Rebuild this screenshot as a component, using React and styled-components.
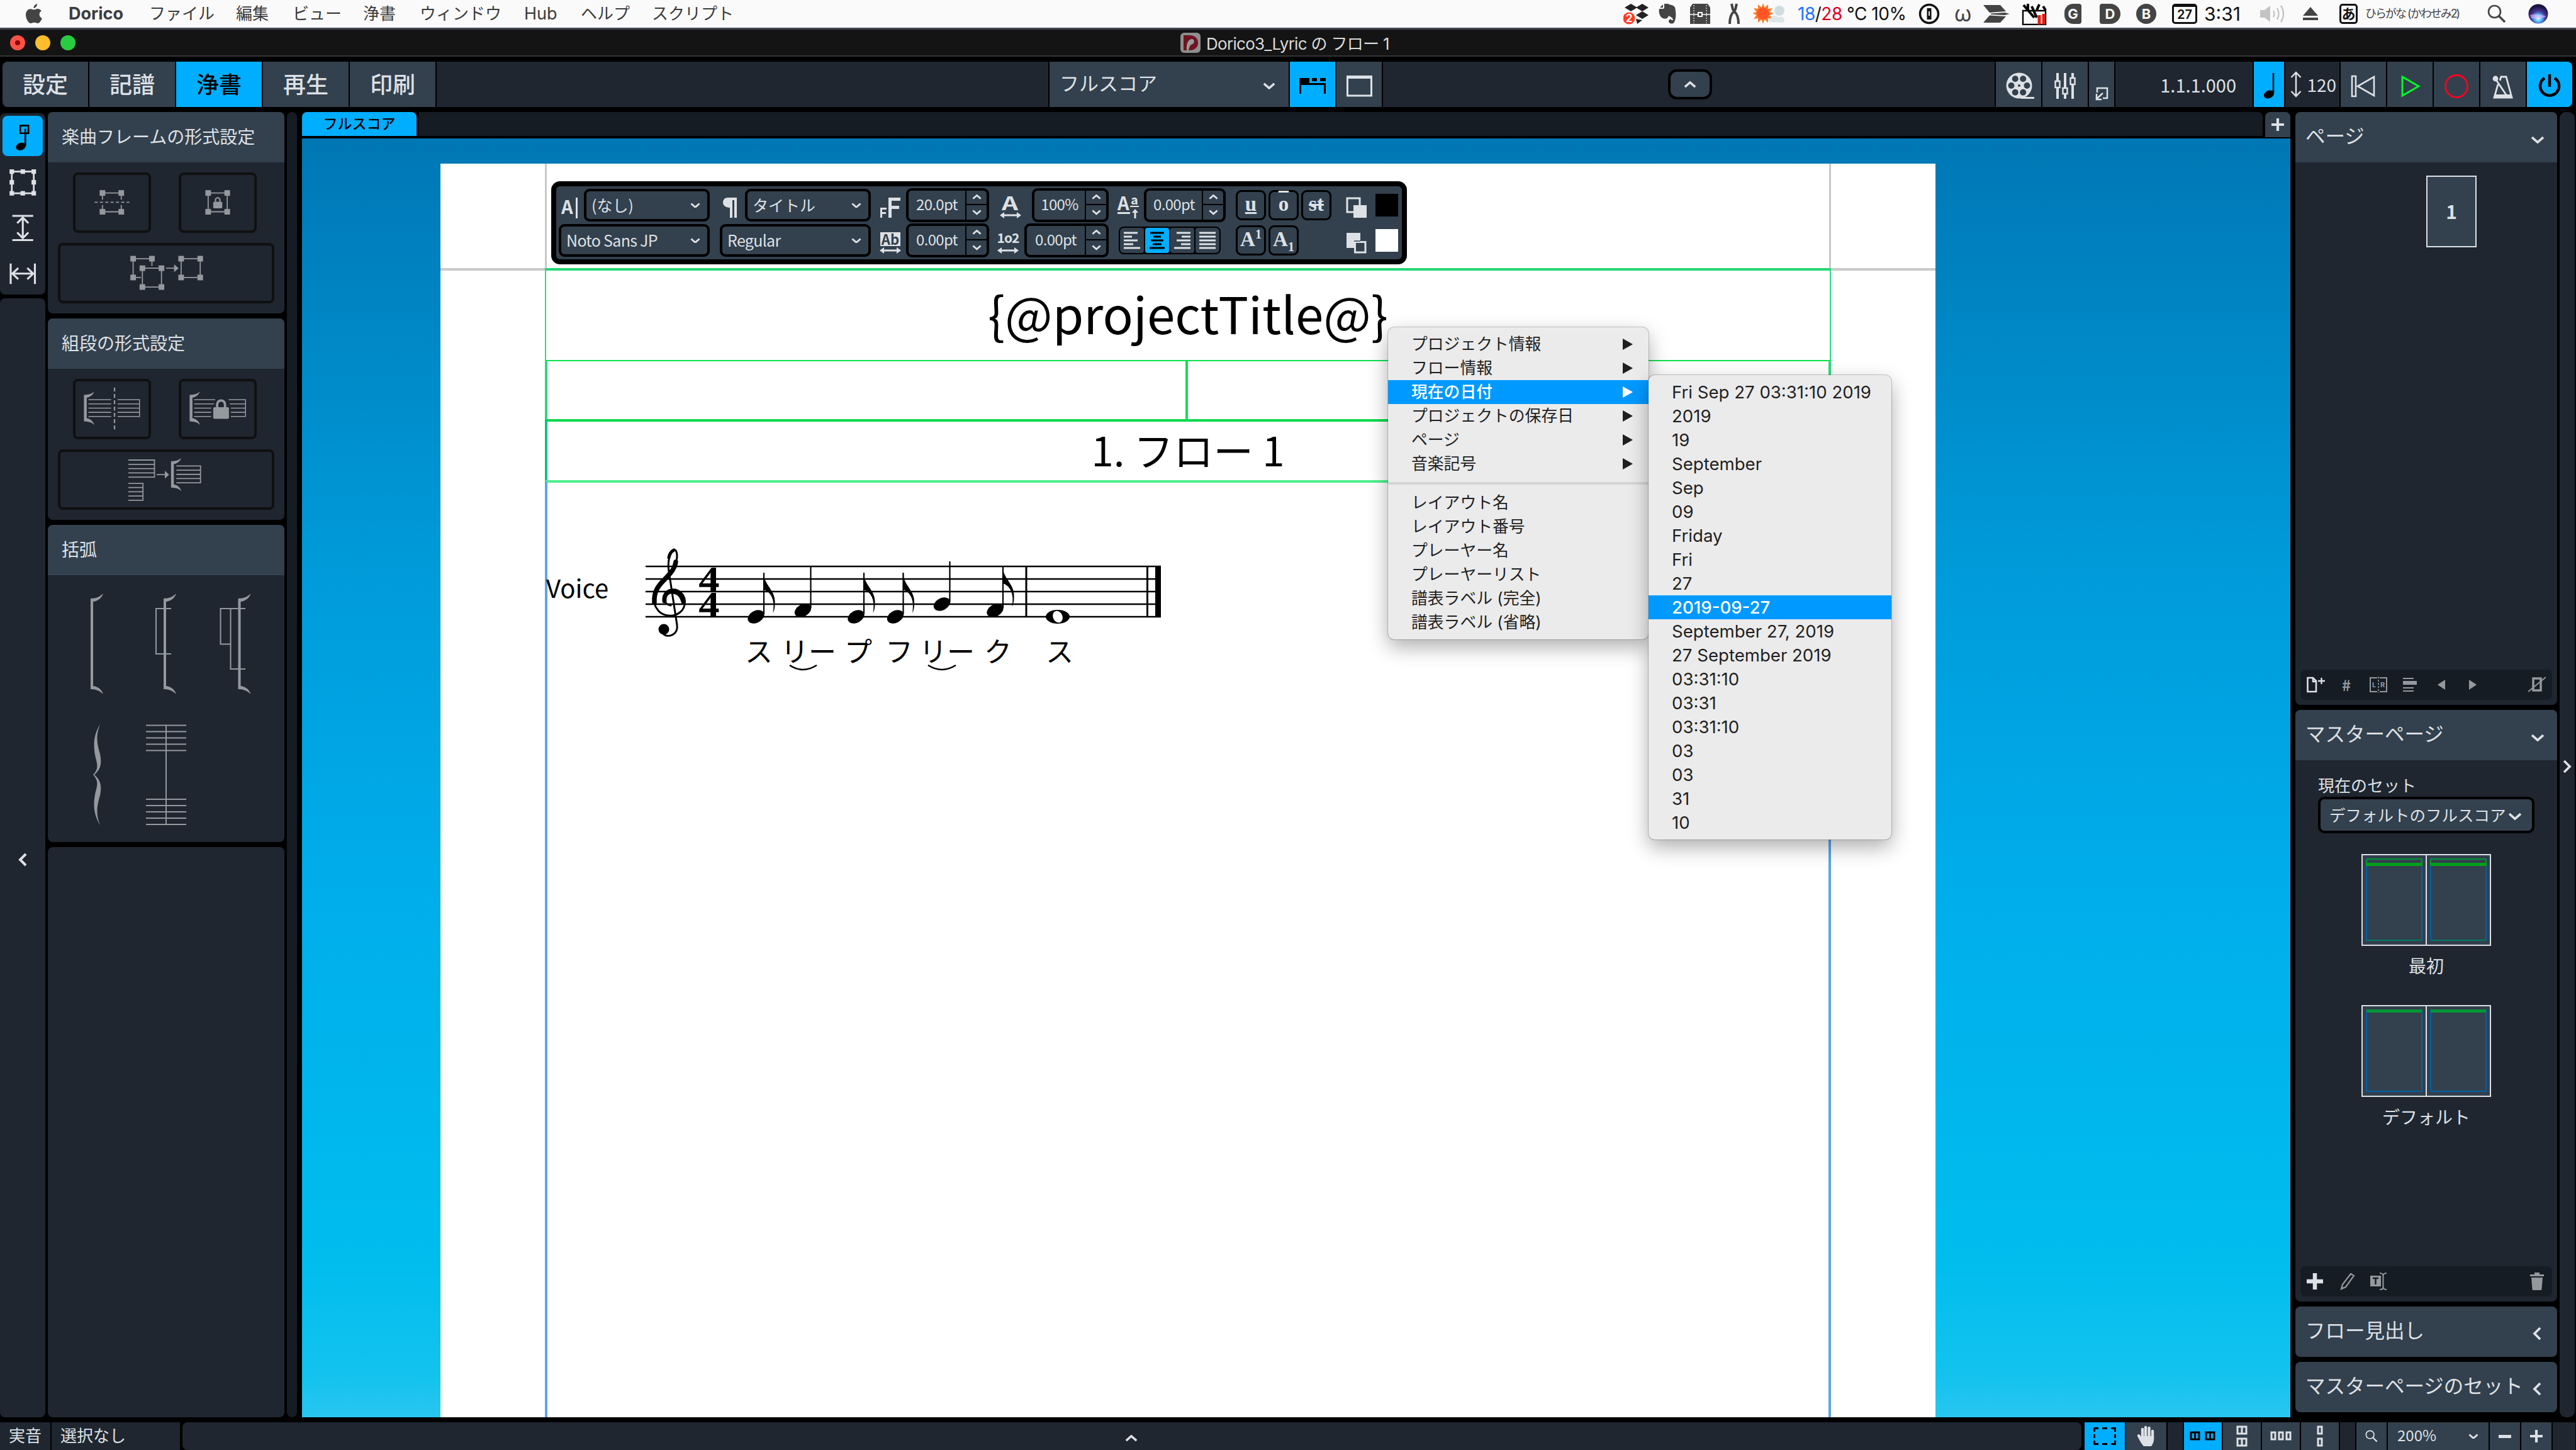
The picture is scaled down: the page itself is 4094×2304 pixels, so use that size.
import React from "react";
import styled, { createGlobalStyle, css } from "styled-components";

const Global = createGlobalStyle`
  * { box-sizing: border-box; }
  html, body { margin: 0; padding: 0; background: #000; }
  svg { display: block; flex: none; }
`;

const noto = '"Noto Sans CJK JP", "Noto Sans", sans-serif';
const mac = 'Inter, "Noto Sans CJK JP", sans-serif';

const light = "#dde1e6";
const dim = "#94999e";
const slate = "#33404d";
const panel = "#1f2630";
const deep = "#151c23";
const azure = "#00aeff";

const Desktop = styled.div`
  width: 4094px;
  height: 2304px;
  overflow: hidden;
  display: flex;
  flex-direction: column;
  background: #000;
  color: ${light};
  font-family: ${noto};
  white-space: nowrap;
`;

/* ---------- mac menu bar ---------- */

const MenuBar = styled.div`
  height: 44px;
  flex: none;
  display: flex;
  align-items: center;
  background: #fafafa;
  color: #3c3c3c;
  font-family: ${mac};
  font-size: 26px;
  line-height: 44px;
`;

const MenuWord = styled.div`
  width: ${(p) => p.w}px;
  flex: none;
  font-size: ${(p) => p.size || 26}px;
  font-weight: ${(p) => (p.bold ? 700 : 400)};
  letter-spacing: ${(p) => p.track || 0}px;
`;

const StatusArea = styled.div`
  margin-left: auto;
  height: 44px;
  display: flex;
  align-items: center;
`;

const StatusSlot = styled.div`
  width: ${(p) => p.w}px;
  height: 44px;
  flex: none;
  display: flex;
  align-items: center;
  color: ${(p) => p.color || "#444"};
  font-size: ${(p) => p.size || 28}px;
  letter-spacing: ${(p) => p.track || 0}px;
`;

const Low = styled.span`
  color: #1f74ff;
`;
const High = styled.span`
  color: #e00022;
`;

const RoundLetter = styled.div`
  width: ${(p) => p.w || 32}px;
  height: 32px;
  line-height: 32px;
  text-align: center;
  border-radius: ${(p) => p.radius || "50%"};
  background: ${(p) => (p.hollow ? "transparent" : "#444")};
  border: ${(p) => (p.hollow ? "3px solid #111" : "0")};
  color: ${(p) => (p.hollow ? "#111" : "#fafafa")};
  font-size: ${(p) => p.size || 22}px;
  font-weight: 700;
  display: flex;
  align-items: center;
  justify-content: center;
`;

/* ---------- window title ---------- */

const TitleBar = styled.div`
  height: 46px;
  flex: none;
  display: flex;
  align-items: center;
  background: #141414;
  border-top: 3px solid #3e4652;
  border-bottom: 2px solid #343434;
  padding-left: 16px;
  font-family: ${mac};
  font-size: 26px;
  letter-spacing: -0.7px;
  color: #dadada;
`;

const Light = styled.div`
  width: 24px;
  height: 24px;
  margin-right: 16px;
  border-radius: 50%;
  background: ${(p) => p.color};
  display: flex;
  align-items: center;
  justify-content: center;
`;

const LightDot = styled.div`
  width: 8px;
  height: 8px;
  border-radius: 50%;
  background: #8f0000;
`;

const DocTitle = styled.div`
  margin-left: 1740px;
  display: flex;
  align-items: center;
  gap: 9px;
`;

/* ---------- main toolbar ---------- */

const Toolbar = styled.div`
  height: 72px;
  flex: none;
  margin: 8px 6px 8px 4px;
  display: flex;
  gap: 2px;
  border-radius: 8px;
  overflow: hidden;
`;

const Cell = styled.div`
  width: ${(p) => p.w}px;
  height: 100%;
  flex: none;
  display: flex;
  align-items: center;
  justify-content: ${(p) => p.justify || "center"};
  padding: ${(p) => p.pad || "0"};
  background: ${(p) => (p.active ? azure : p.dark ? panel : slate)};
  color: ${(p) => (p.active ? "#000" : light)};
  font-size: ${(p) => p.size || 36}px;
  font-weight: ${(p) => p.weight || 400};
  line-height: 1;
`;

const Raise = styled.span`
  display: block;
  padding-bottom: ${(p) => p.by || 4}px;
`;

const Sink = styled.span`
  display: block;
  padding-top: ${(p) => p.by || 6}px;
`;

const CollapseKey = styled.div`
  width: 70px;
  height: 48px;
  border: 4px solid #000;
  border-radius: 14px;
  background: ${slate};
  display: flex;
  align-items: center;
  justify-content: center;
`;

/* ---------- workspace columns ---------- */

const Workspace = styled.div`
  height: 2074px;
  flex: none;
  display: flex;
`;

const ToolColumn = styled.div`
  width: 72px;
  height: 100%;
  padding-top: 2px;
  display: flex;
  flex-direction: column;
  gap: 6px;
`;

const ToolBox = styled.div`
  height: 288px;
  padding: 4px;
  display: flex;
  flex-direction: column;
  gap: 9px;
  background: ${panel};
  border-radius: 8px;
`;

const Tool = styled.div`
  width: 64px;
  height: 64px;
  flex: none;
  border-radius: 8px;
  background: ${(p) => (p.active ? azure : "transparent")};
`;

const ToolRest = styled.div`
  flex: 1;
  display: flex;
  align-items: center;
  justify-content: center;
  padding-top: 6px;
  background: ${panel};
  border-radius: 8px;
`;

const LeftPanels = styled.div`
  width: 376px;
  margin-left: 4px;
  display: flex;
  flex-direction: column;
  gap: 8px;
`;

const Card = styled.section`
  height: ${(p) => (p.h ? p.h + "px" : "auto")};
  flex: ${(p) => (p.h ? "none" : "1")};
  display: flex;
  flex-direction: column;
  background: ${panel};
  border-radius: 8px;
  overflow: hidden;
`;

const CardHeader = styled.header`
  height: 80px;
  flex: none;
  display: flex;
  align-items: center;
  justify-content: space-between;
  padding: 0 ${(p) => p.right || 20}px 0 ${(p) => p.left || 22}px;
  background: ${slate};
  font-size: ${(p) => p.size || 28}px;
  line-height: 1;
`;

const KeyRow = styled.div`
  display: flex;
  justify-content: center;
  gap: 44px;
  padding-right: ${(p) => (p.single ? 0 : 4)}px;
  margin-top: 16px;
`;

const Key = styled.div`
  width: ${(p) => (p.wide ? 344 : 124)}px;
  height: 96px;
  border: 4px solid #101010;
  border-radius: 8px;
  display: flex;
  align-items: center;
  justify-content: center;
`;

const BracketGrid = styled.div`
  display: grid;
  grid-template-columns: repeat(3, 110px);
  grid-template-rows: 160px 160px;
  row-gap: 48px;
  padding: 29px 0 0 23px;
`;

const Gutter = styled.div`
  width: 16px;
  height: 100%;
  margin: 0 8px 0 4px;
  border-radius: 8px;
  background: ${deep};
`;

/* ---------- canvas ---------- */

const Center = styled.div`
  width: 3160px;
  display: flex;
  flex-direction: column;
`;

const TabStrip = styled.div`
  height: 42px;
  flex: none;
  display: flex;
  gap: 4px;
`;

const Tab = styled.div`
  width: 182px;
  height: 38px;
  border-radius: 8px 8px 0 0;
  background: ${azure};
  color: #000;
  font-size: 23px;
  font-weight: 500;
  line-height: 34px;
  text-align: center;
`;

const TabRest = styled.div`
  flex: 1;
  height: 38px;
  border-radius: 0 8px 0 0;
  background: ${deep};
`;

const AddTab = styled.div`
  width: 40px;
  height: 40px;
  display: flex;
  align-items: center;
  justify-content: center;
  border-radius: 8px 8px 0 0;
  background: ${slate};
`;

const Canvas = styled.div`
  position: relative;
  flex: 1;
  padding: 40px 0 0 220px;
  overflow: hidden;
  background: linear-gradient(#0077b5 0%, #0099d8 32%, #00adea 58%, #00bdee 88%, #14c3ee 97%, #28c6f0 100%);
`;

const Page = styled.div`
  width: 2376px;
  height: 1992px;
  background: #fff;
  color: #000;
`;

const MarginBand = styled.div`
  height: 170px;
  border-bottom: 4px solid #c9c9c9;
  padding: 0 166px;
`;

const MarginGuides = styled.div`
  height: 166px;
  border: 3px solid #c9c9c9;
  border-width: 0 3px;
`;

const FrameStack = styled.div`
  margin: -4px 166px 0 166px;
  display: flex;
  flex-direction: column;
`;

const TitleFrame = styled.div`
  height: 146px;
  border-top: 4px solid #22d873;
  border-left: 2px solid #2fd983;
  border-right: 2px solid #2fd983;
  text-align: center;
  font-size: 80px;
  line-height: 132px;
`;

const SplitFrame = styled.div`
  height: 94px;
  display: grid;
  grid-template-columns: 1fr 1fr;
  border-top: 2px solid #0ee04f;
  border-left: 4px solid #2ada78;
  border-right: 4px solid #2ada78;
`;

const SplitCell = styled.div`
  border-right: ${(p) => (p.last ? "0" : "4px solid #10e04f")};
`;

const FlowFrame = styled.div`
  height: 97px;
  border-top: 4px solid #00d84c;
  border-left: 4px solid #00c87a;
  border-right: 4px solid #00c87a;
  text-align: center;
  font-size: 63.5px;
  line-height: 86px;
`;

const MusicFrame = styled.div`
  height: 1520px;
  border-top: 4px solid #4cf08c;
  border-left: 4px solid #5aa6e6;
  border-right: 4px solid #5aa6e6;
  padding-top: 93px;
`;

/* ---------- floating text editor ---------- */

const EditorBar = styled.div`
  position: absolute;
  left: 396px;
  top: 68px;
  width: 1360px;
  height: 132px;
  border: 8px solid #000;
  border-radius: 14px;
  background: ${slate};
  color: ${light};
`;

const EditorRow = styled.div`
  height: ${(p) => p.h}px;
  display: flex;
  align-items: center;
  padding-left: ${(p) => p.pad || 0}px;
`;

const Gap = styled.div`
  width: ${(p) => p.w}px;
  flex: none;
`;

const GlyphSlot = styled.div`
  width: ${(p) => p.w}px;
  height: 52px;
  flex: none;
  display: flex;
  align-items: center;
  justify-content: center;
  padding: 8px 0 0 ${(p) => p.shift || 0}px;
`;

const Select = styled.div`
  width: ${(p) => p.w}px;
  height: 52px;
  flex: none;
  display: flex;
  align-items: center;
  justify-content: space-between;
  padding: 0 11px 2px 8px;
  border: 4px solid #000;
  border-radius: 9px;
  font-size: 25px;
  letter-spacing: ${(p) => (p.tight ? -0.7 : 0)}px;
  line-height: 1;
`;

const SpinBox = styled.div`
  width: ${(p) => p.w}px;
  height: 54px;
  flex: none;
  display: flex;
  border: 4px solid #000;
  border-radius: 9px;
`;

const SpinValue = styled.div`
  flex: 1;
  text-align: center;
  font-size: 24px;
  line-height: 42px;
  letter-spacing: -0.7px;
`;

const SpinKeys = styled.div`
  width: 34px;
  border-left: 2px solid #000;
  display: grid;
  grid-template-rows: 1fr 1fr;
`;

const SpinKey = styled.div`
  display: flex;
  align-items: center;
  justify-content: center;
  border-bottom: ${(p) => (p.up ? "2px solid #000" : "0")};
`;

const StyleKey = styled.div`
  width: 48px;
  height: 48px;
  margin-right: 4px;
  flex: none;
  border: 3px solid #000;
  border-radius: 9px;
  font-family: "Liberation Serif", serif;
  font-size: 33px;
  font-weight: 700;
  line-height: 38px;
  text-align: center;
  text-decoration: ${(p) => p.line || "none"};
  text-decoration-thickness: 3px;
  sup, sub { font-size: 20px; line-height: 0; }
`;

const AlignGroup = styled.div`
  width: 162px;
  height: 44px;
  flex: none;
  display: flex;
  gap: 2px;
  border: 2px solid #000;
  border-radius: 8px;
  background: #000;
  overflow: hidden;
`;

const AlignKey = styled.div`
  width: 38px;
  height: 40px;
  display: flex;
  align-items: center;
  justify-content: center;
  border-radius: 4px;
  background: ${(p) => (p.active ? azure : slate)};
`;

const Swatch = styled.div`
  width: 36px;
  height: 36px;
  background: ${(p) => p.color};
`;

/* ---------- context menus ---------- */

const Popup = styled.div`
  position: absolute;
  left: ${(p) => p.x}px;
  top: ${(p) => p.y}px;
  width: ${(p) => p.w}px;
  padding: 8px 0;
  border-radius: 10px;
  background: #ebebeb;
  color: #1f1f1f;
  font-family: ${mac};
  font-size: ${(p) => p.size || 26}px;
  box-shadow: 0 0 0 1px rgba(0, 0, 0, 0.2), 0 12px 32px rgba(0, 0, 0, 0.32);
`;

const PopupItem = styled.div`
  height: 38px;
  display: flex;
  align-items: center;
  justify-content: space-between;
  padding: 0 25px 0 37px;
  line-height: 40px;
  ${(p) =>
    p.active &&
    css`
      background: #0099ff;
      color: #fff;
      font-weight: 500;
    `}
`;

const PopupRule = styled.div`
  height: 4px;
  margin: 10px 0;
  background: #d5d5d5;
`;

/* ---------- right side ---------- */

const RightPanels = styled.div`
  width: 416px;
  margin-left: 8px;
  display: flex;
  flex-direction: column;
  gap: 8px;
  height: 2066px;
`;

const RightGutter = styled.div`
  width: 24px;
  margin-left: 4px;
  display: flex;
  align-items: center;
  justify-content: center;
  padding-top: 5px;
  border-radius: 10px;
  background: ${panel};
`;

const CardBody = styled.div`
  flex: 1;
  display: flex;
  flex-direction: column;
  align-items: center;
`;

const PageThumb = styled.div`
  width: 80px;
  height: 114px;
  margin: 21px 0 0 80px;
  border: 2px solid ${light};
  background: ${slate};
  font-size: 30px;
  font-weight: 700;
  line-height: 108px;
  text-align: center;
`;

const CardFooter = styled.div`
  height: 48px;
  flex: none;
  display: flex;
  align-items: center;
  margin: 0 8px 8px;
  padding: 0 8px 0 10px;
  border-radius: 8px;
  background: ${deep};
`;

const FooterSlot = styled.div`
  width: ${(p) => p.w}px;
  flex: none;
  color: ${dim};
  font-size: 24px;
  font-weight: 700;
  line-height: 1;
`;

const SetLabel = styled.div`
  align-self: flex-start;
  margin: 20px 0 0 36px;
  font-size: 26px;
  line-height: 38px;
`;

const SetSelect = styled.div`
  width: 344px;
  height: 58px;
  display: flex;
  align-items: center;
  justify-content: space-between;
  padding: 0 16px 2px 14px;
  border: 4px solid #000;
  border-radius: 10px;
  background: ${slate};
  font-size: 25.5px;
  line-height: 1;
`;

const Spread = styled.div`
  width: 206px;
  height: 146px;
  flex: none;
  margin-top: ${(p) => p.top}px;
  display: grid;
  grid-template-columns: 1fr 1fr;
  border: 2px solid ${light};
  background: ${slate};
`;

const SpreadPage = styled.div`
  border: 0 solid ${light};
  border-width: ${(p) => (p.last ? "0 0 0 1px" : "0 1px 0 0")};
  padding: 5px 5px 6px 5px;
`;

const SpreadMargin = styled.div`
  height: 100%;
  border: 2px solid #0060a8;
  border-top: ${(p) => (p.first ? "2px" : "5px")} solid #00963a;
  border-bottom-color: ${(p) => (p.first ? "#007c60" : "#0060a8")};
`;

const SpreadHead = styled.div`
  height: 10px;
  border: 2px solid #00a01c;
  border-top: 0;
  margin: 0 -2px;
  border-bottom-width: 5px;
`;

const SpreadName = styled.div`
  margin-top: 11px;
  font-size: 28px;
  line-height: 40px;
`;

/* ---------- status bar ---------- */

const StatusBar = styled.div`
  height: 44px;
  flex: none;
  margin: 8px 2px 0 0;
  display: flex;
  gap: 2px;
`;

const BarFill = styled.div`
  width: 3018px;
  height: 44px;
  flex: none;
  margin: 0 3px 0 2px;
  padding: 20px 0 0 1498px;
  border-radius: 8px;
  background: ${panel};
`;

/* ---------- drawings ---------- */

const angles = {
  down: "M2 2 L11 10 L20 2",
  up: "M2 10 L11 2 L20 10",
  left: "M12 2 L3 11 L12 20",
  right: "M2 2 L11 11 L2 20",
};

const Angle = ({ dir = "down", size = 22, color = light, weight = 3.8 }) => {
  const side = dir === "left" || dir === "right";
  return (
    <svg
      width={side ? size * 0.64 : size}
      height={side ? size : size * 0.55}
      viewBox={side ? "0 0 14 22" : "0 0 22 12"}
    >
      <path d={angles[dir]} fill="none" stroke={color} strokeWidth={weight} />
    </svg>
  );
};

const Plus = ({ size = 24, color = light, weight = 5 }) => (
  <svg width={size} height={size} viewBox="0 0 24 24">
    <path d="M0 12 H24 M12 0 V24" stroke={color} strokeWidth={weight} />
  </svg>
);

const Apple = () => (
  <svg width="26" height="32" viewBox="0 0 26 32" fill="#444">
    <path d="M18 0 C18 4 15 7 12.500 7 C12 4 15 0.500 18 0 Z" />
    <path d="M13 9.500 C15 9.500 16 8 19 8 C21.500 8 23.600 9.300 24.800 11.200 C20 14 20.800 21 25.800 23 C24.500 26.500 22 31 19 31 C17 31 16 29.800 13.500 29.800 C11 29.800 10 31 8 31 C4 31 0 23.500 0 17.500 C0 11.500 3.800 8.200 7.500 8.200 C10 8.200 11.500 9.500 13 9.500 Z" />
  </svg>
);

const Dropbox = () => (
  <svg width="40" height="34" viewBox="0 0 40 34">
    <path
      fill="#222"
      d="M12 1 L22 7 L12 13 L2 7 Z M30 1 L40 7 L30 13 L20 7 Z M30 13 L40 19 L30 25 L20 19 Z M20 25 L30 27 L22 33 Z"
    />
    <circle cx="9" cy="24" r="9.500" fill="#ff3b1f" />
    <text x="9" y="30" textAnchor="middle" fill="#fff" fontSize="17" fontFamily="Inter" fontWeight="700">2</text>
  </svg>
);

const Elephant = () => (
  <svg width="28" height="34" viewBox="0 0 28 34">
    <path
      fill="#444"
      d="M9 1 H15 C18 3 25 3 26 7 C28 15 28 24 25 30 C23 34 16 33 16 29 C16 25 20 25 21 27 L23 27 C22 22 19 22 16 20 C15 25 9 26 5 23 C1 20 0 13 1 9 H7 C8 9 9 8 9 7 Z M7 2 V7 H2 Z"
    />
  </svg>
);

const Chest = () => (
  <svg width="32" height="34" viewBox="0 0 32 34">
    <path fill="#444" d="M4 1 H28 L32 7 V33 H0 V7 Z" />
    <path stroke="#fafafa" strokeWidth="1.500" d="M0 18 H12 M20 18 H32" />
    <path stroke="#fafafa" strokeWidth="1.200" strokeDasharray="2 2" d="M6 3 V32 M26 3 V32" />
    <rect x="13" y="15" width="6" height="6" fill="none" stroke="#fafafa" strokeWidth="2" />
  </svg>
);

const Pliers = () => (
  <svg width="20" height="34" viewBox="0 0 20 34">
    <path
      d="M6 1 L8 10 L10 13 L12 10 L14 1 M10 13 C5 17 3 24 3 33 M10 13 C15 17 17 24 17 33"
      fill="none"
      stroke="#444"
      strokeWidth="4"
    />
  </svg>
);

const Weather = () => (
  <svg width="52" height="34" viewBox="0 0 52 34">
    <path
      fill="#ff7a2a"
      d="M16 0 L18.500 7 L24 2 L24 9 L31 8 L26.500 14 L33 16 L26.500 19 L31 25 L24 24 L24 31 L18.500 26 L16 33 L13.500 26 L8 31 L8 24 L1 25 L5.500 19 L-1 16 L5.500 14 L1 8 L8 9 L8 2 L13.500 7 Z"
    />
    <circle cx="16" cy="16.500" r="9.500" fill="#ff5526" />
    <circle cx="42" cy="12" r="8" fill="#cfdde0" />
    <path fill="#dde6e8" d="M28 30 C24 30 24 24 29 24 C30 19 38 19 40 23 C47 18 54 28 47 31 Z" />
  </svg>
);

const KeyholeIcon = () => (
  <svg width="34" height="34" viewBox="0 0 34 34">
    <circle cx="17" cy="17" r="14.500" fill="none" stroke="#111" strokeWidth="3.500" />
    <path d="M17 8 V26" stroke="#111" strokeWidth="7" />
    <path d="M17 13 V20" stroke="#fafafa" strokeWidth="1.800" />
  </svg>
);

const Wings = () => (
  <svg width="42" height="28" viewBox="0 0 42 28" fill="#444">
    <path d="M0 0 H27 L36 10 L10 12 Z M12 13.500 L34 12 L42 14 L34 16 L12 15 Z M0 28 L10 16.500 L36 18 L27 28 Z" />
  </svg>
);

const Toolbox = () => (
  <svg width="40" height="36" viewBox="0 0 40 36">
    <path fill="none" stroke="#000" strokeWidth="2.400" d="M2 13 H38 V35 H2 Z" />
    <path stroke="#000" strokeWidth="4" d="M3 4 L20 24 M10 2 V12 M16 6 L24 24 M28 3 L24 12 M34 6 L38 12" />
    <path stroke="#e02010" strokeWidth="5" d="M28 35 V20 M35 35 V18" />
  </svg>
);

const Calendar = styled.div`
  width: 40px;
  height: 32px;
  border: 3px solid #111;
  border-top-width: 5px;
  border-radius: 5px;
  color: #111;
  font-size: 20px;
  font-weight: 600;
  line-height: 24px;
  text-align: center;
`;

const Speaker = () => (
  <svg width="42" height="32" viewBox="0 0 42 32">
    <path fill="#c4c4c4" d="M0 10 H7 L16 3 V29 L7 22 H0 Z" />
    <path
      d="M21 11 Q24 16 21 21 M27 7 Q32 16 27 25 M33 3 Q41 16 33 29"
      fill="none"
      stroke="#c4c4c4"
      strokeWidth="2.400"
    />
  </svg>
);

const Eject = () => (
  <svg width="24" height="22" viewBox="0 0 24 22" fill="#444">
    <path d="M12 0 L24 14 H0 Z M0 17 H24 V21 H0 Z" />
  </svg>
);

const Search = ({ size = 30, color = "#444" }) => (
  <svg width={size} height={size} viewBox="0 0 30 30" fill="none" stroke={color}>
    <circle cx="11.500" cy="11.500" r="9.500" strokeWidth="2.600" />
    <path d="M18 18 L28 28" strokeWidth="3.400" />
  </svg>
);

const Siri = () => (
  <svg width="32" height="32" viewBox="0 0 32 32">
    <defs>
      <radialGradient id="orb" cx="50%" cy="72%" r="60%">
        <stop offset="0" stopColor="#fff" />
        <stop offset="0.300" stopColor="#4fc0ff" />
        <stop offset="0.600" stopColor="#4a3898" />
        <stop offset="1" stopColor="#1c1440" />
      </radialGradient>
    </defs>
    <circle cx="16" cy="16" r="15.500" fill="url(#orb)" />
    <path d="M3 18 Q12 14 29 20 Q18 25 5 23 Z" fill="#e9b6ff" opacity="0.600" />
  </svg>
);

const AppIcon = () => (
  <svg width="32" height="32" viewBox="0 0 32 32">
    <rect width="32" height="32" rx="6" fill="#8e8e8e" />
    <path fill="#6d1420" d="M5 4 H14 C22 4 28 8 28 16 C28 24 22 28 14 28 H5 Z" />
    <path fill="#9a9a9a" d="M10 28 C9 18 12 10 19 10 C23 11 23 18 17 19 C15 20 14 24 13 28 Z" />
  </svg>
);

const GalleyIcon = () => (
  <svg width="72" height="72" viewBox="0 0 72 72" fill="#000">
    <path d="M15 26 H31 V34 H57 V51 H54 V37 H18 V51 H15 Z M35 26 H43 V31 H35 Z M48 26 H57 V31 H48 Z" />
  </svg>
);

const WindowIcon = () => (
  <svg width="72" height="72" viewBox="0 0 72 72">
    <path fill="none" stroke={light} strokeWidth="3" d="M17.500 24 H55.500 V54 H17.500 Z" />
    <path fill={light} d="M16 22 H57 V27 H16 Z" />
  </svg>
);

const FilmIcon = () => (
  <svg width="72" height="72" viewBox="0 0 72 72">
    <circle cx="37" cy="38" r="20.500" fill={light} />
    <path stroke={light} strokeWidth="3" d="M40 57.500 H61" />
    <g fill={slate}>
      {[0, 1, 2, 3, 4, 5].map((n) => (
        <circle
          key={n}
          cx={37 + 12.500 * Math.cos((n * Math.PI) / 3)}
          cy={38 + 12.500 * Math.sin((n * Math.PI) / 3)}
          r="5"
        />
      ))}
      <circle cx="37" cy="38" r="2" />
    </g>
  </svg>
);

const MixerIcon = () => (
  <svg width="72" height="72" viewBox="0 0 72 72">
    <path stroke={light} strokeWidth="4" d="M24 18 V59 M36 18 V59 M48 18 V59" />
    <g fill={slate} stroke={light} strokeWidth="2.500">
      <rect x="20.500" y="31" width="7" height="10" />
      <rect x="32.500" y="42" width="7" height="9" />
      <rect x="44.500" y="26" width="7" height="10" />
    </g>
  </svg>
);

const PopOutIcon = () => (
  <svg width="40" height="72" viewBox="0 0 40 72" fill="none" stroke={light} strokeWidth="2.500">
    <path d="M13 49 V42 H29 V58 H22 M11 60 L22 50 M12 51 V60 H20" />
  </svg>
);

const QuarterIcon = () => (
  <svg width="48" height="72" viewBox="0 0 48 72">
    <ellipse cx="24" cy="52" rx="8.500" ry="6" transform="rotate(-24 24 52)" />
    <path d="M31 18 V50" stroke="#000" strokeWidth="2.500" />
  </svg>
);

const UpDownIcon = () => (
  <svg width="18" height="42" viewBox="0 0 18 42" fill="none" stroke={light} strokeWidth="2.500">
    <path d="M9 2 V40 M1.500 10 L9 2 L16.500 10 M1.500 32 L9 40 L16.500 32" />
  </svg>
);

const RewindIcon = () => (
  <svg width="72" height="72" viewBox="0 0 72 72" fill="none" stroke={light} strokeWidth="2.600">
    <path d="M18 23 H24 V55 H18 Z M53 24 V54 L27 39 Z" />
  </svg>
);

const PlayIcon = () => (
  <svg width="72" height="72" viewBox="0 0 72 72" fill="none" stroke="#00ff26" strokeWidth="2.800">
    <path d="M24 24 V54 L50 39 Z" />
  </svg>
);

const RecordIcon = () => (
  <svg width="72" height="72" viewBox="0 0 72 72" fill="none" stroke="#ff0022" strokeWidth="2.800">
    <circle cx="36" cy="39" r="17.500" />
  </svg>
);

const MetronomeIcon = () => (
  <svg width="72" height="72" viewBox="0 0 72 72" fill="none" stroke={light} strokeWidth="2.800">
    <path d="M28 36 L22 57 H50 L41 24 H33 L31 30 M23 26 L42 54" />
    <path d="M23 55 H49" strokeWidth="6" />
    <circle cx="24" cy="27" r="3" fill={light} />
  </svg>
);

const PowerIcon = () => (
  <svg width="72" height="72" viewBox="0 0 72 72" fill="none" stroke="#000" strokeWidth="4.500">
    <path d="M36 20 V40 M28 26 A15 15 0 1 0 44 26" />
  </svg>
);

// square handles used by every music frame drawing
const Handles = ({ points, size = 20, color = dim }) =>
  points.map(([x, y]) => (
    <rect key={x + "-" + y} x={x - size / 2} y={y - size / 2} width={size} height={size} fill={color} />
  ));

const SelectTool = () => (
  <svg width="64" height="64" viewBox="9 54 143 143">
    <path fill="none" stroke="#000" strokeWidth="6" d="M72 89 H101 V116 H72 Z M90 100 V162" />
    <ellipse cx="74" cy="163" rx="18" ry="13" transform="rotate(-20 74 163)" />
  </svg>
);

const FrameTool = () => (
  <svg width="64" height="64" viewBox="9 219 143 143">
    <path fill="none" stroke={light} strokeWidth="6" d="M42 254 H120 V331 H42 Z" />
    <Handles
      color={light}
      size={16}
      points={[[42, 254], [81, 254], [120, 254], [42, 292], [120, 292], [42, 331], [81, 331], [120, 331]]}
    />
  </svg>
);

const StaffSpacingTool = () => (
  <svg width="64" height="64" viewBox="9 382 143 143" fill="none" stroke={light} strokeWidth="7">
    <path d="M44 411 H118 M44 497 H118 M81 416 V492 M61 437 L81 417 L101 437 M61 470 L81 490 L101 470" />
  </svg>
);

const NoteSpacingTool = () => (
  <svg width="64" height="64" viewBox="9 544 143 143" fill="none" stroke={light} strokeWidth="7">
    <path d="M38 579 V652 M124 579 V652 M43 615 H119 M65 595 L44 615 L65 635 M97 595 L118 615 L97 635" />
  </svg>
);

const Padlock = ({ x, y, w }) => (
  <g>
    <rect x={x} y={y} width={w} height={w * 0.74} rx="4" fill={dim} />
    <path
      d={`M${x + w * 0.25} ${y} V${y - w * 0.18} A${w * 0.25} ${w * 0.25} 0 0 1 ${x + w * 0.75} ${y - w * 0.18} V${y}`}
      fill="none"
      stroke={dim}
      strokeWidth={w * 0.15}
    />
  </g>
);

const FrameBreakIcon = () => (
  <svg width="116" height="88" viewBox="269 264 260 197">
    <path d="M365 328 H432 M365 395 H432 M365 338 V352 M432 338 V352 M365 371 V390 M432 371 V390" stroke={dim} strokeWidth="4" />
    <path d="M337 361 H461" stroke={dim} strokeWidth="4" strokeDasharray="11 8" />
    <Handles points={[[365, 328], [432, 328], [365, 395], [432, 395]]} />
  </svg>
);

const FrameLockIcon = () => (
  <svg width="116" height="88" viewBox="645 264 260 197">
    <path d="M741 328 H809 V395 H741 Z" fill="none" stroke={dim} strokeWidth="4" />
    <Handles points={[[741, 328], [809, 328], [741, 395], [809, 395]]} />
    <Padlock x={759} y={359} w={32} />
  </svg>
);

const FrameMergeIcon = () => (
  <svg width="336" height="88" viewBox="215 515 753 197">
    <g fill="none" stroke={dim} strokeWidth="4">
      <path d="M502 629 H474 V562 H541 V588" />
      <path d="M507 596 H575 V663 H507 Z M645 562 H713 V629 H645 Z M591 596 H622" />
    </g>
    <path d="M620 582 L636 596 L620 610 Z" fill={dim} />
    <Handles
      points={[
        [474, 562], [541, 562], [474, 629], [507, 596], [575, 596], [507, 663], [575, 663],
        [645, 562], [713, 562], [645, 629], [713, 629],
      ]}
    />
  </svg>
);

const BracketShape = ({ x, y }) => (
  <path
    fill={dim}
    d={`M${x} ${y} C${x + 18} ${y} ${x + 29} ${y - 4} ${x + 37} ${y - 12} C${x + 32} ${y + 1} ${x + 22} ${y + 8} ${x + 10} ${y + 10} V${y + 83} C${x + 22} ${y + 85} ${x + 32} ${y + 92} ${x + 37} ${y + 107} C${x + 29} ${y + 98} ${x + 18} ${y + 95} ${x} ${y + 94} Z`}
  />
);

const lines5 = (x1, x2, y, step) =>
  [0, 1, 2, 3, 4].map((n) => `M${x1} ${y + n * step} H${x2}`).join(" ");

const SystemBreakIcon = () => (
  <svg width="116" height="88" viewBox="269 999 260 197">
    <BracketShape x={299} y={1047} />
    <path d={lines5(315, 396, 1064, 15) + lines5(419, 497, 1064, 15) + "M497 1062 V1126"} stroke={dim} strokeWidth="3.500" />
    <path d="M408 1021 V1172" stroke={dim} strokeWidth="5" strokeDasharray="14 8.500" />
  </svg>
);

const SystemLockIcon = () => (
  <svg width="116" height="88" viewBox="645 999 260 197">
    <BracketShape x={675} y={1047} />
    <path
      d="M691 1064 H766 M691 1079 H762 M691 1094 H752 M691 1109 H752 M691 1124 H752 M814 1064 H874 M818 1079 H874 M822 1094 H874 M822 1109 H874 M822 1124 H874 V1062"
      fill="none"
      stroke={dim}
      strokeWidth="3.500"
    />
    <Padlock x={759} y={1091} w={56} />
  </svg>
);

const SystemMergeIcon = () => (
  <svg width="336" height="88" viewBox="215 1250 753 197">
    <path
      d={
        lines5(457, 550, 1279, 15.2) + "M550 1277 V1342" +
        lines5(457, 509, 1362, 15) + "M509 1360 V1424" +
        lines5(628, 714, 1300, 15) + "M714 1298 V1362 M558 1331 H590"
      }
      stroke={dim}
      strokeWidth="4"
    />
    <path d="M587 1317 L602 1331 L587 1345 Z" fill={dim} />
    <BracketShape x={609} y={1283} />
  </svg>
);

const Bracket = ({ x }) => (
  <path
    fill={dim}
    d={`M${x} 951 C${x + 9} 951 ${x + 15} 948 ${x + 20} 943 C${x + 18} 950 ${x + 12} 955 ${x + 4} 956 V1090 C${x + 12} 1091 ${x + 18} 1096 ${x + 20} 1103 C${x + 15} 1098 ${x + 9} 1095 ${x} 1095 Z`}
  />
);

const BracketPalette = () => (
  <BracketGrid>
    <svg width="110" height="160" viewBox="99 943 110 160">
      <Bracket x={144} />
    </svg>
    <svg width="110" height="160" viewBox="209 943 110 160">
      <Bracket x={260} />
      <path d="M272 967 H248 V1039 H272" fill="none" stroke={dim} strokeWidth="2" />
    </svg>
    <svg width="110" height="160" viewBox="319 943 110 160">
      <Bracket x={378.500} />
      <path d="M390 967 H350.500 V1023.500 H366.500 M366.500 967 V1063 H390" fill="none" stroke={dim} strokeWidth="2" />
    </svg>
    <svg width="110" height="160" viewBox="99 1151 110 160">
      <path
        fill={dim}
        d="M159 1151 C147 1170 148 1190 153 1208 C156 1220 154 1224 148 1231 C154 1238 156 1243 153 1254 C148 1272 147 1292 159 1311 C152 1294 154 1280 159 1264 C162 1248 160 1240 150 1231 C160 1222 162 1214 159 1198 C154 1182 152 1168 159 1151 Z"
      />
    </svg>
    <svg width="110" height="160" viewBox="209 1151 110 160">
      <path d={lines5(232, 296, 1152.500, 10) + lines5(232, 296, 1270, 10) + "M264 1152 V1310"} stroke={dim} strokeWidth="2" />
    </svg>
  </BracketGrid>
);

/* ---------- score ---------- */

const notes = [
  { x: 1201.5, y: 980, top: 910, flag: true },
  { x: 1276, y: 970, top: 900 },
  { x: 1360.5, y: 980, top: 910, flag: true },
  { x: 1423, y: 980, top: 910, flag: true },
  { x: 1497, y: 960, top: 892 },
  { x: 1581.5, y: 970, top: 900, flag: true },
];

const lyrics = [
  [1184, "ス"], [1241, "リー"], [1342, "プ"], [1407, "フ"], [1461, "リー"], [1564, "ク"], [1662, "ス"],
];

const Note = ({ x, y, top, flag }) => (
  <g>
    <ellipse cx={x} cy={y} rx="14" ry="9.500" transform={`rotate(-28 ${x} ${y})`} />
    <path d={`M${x + 12.5} ${y - 4} V${top}`} stroke="#000" strokeWidth="2.200" />
    {flag && (
      <path
        d={`M${x + 11.5} ${top} C${x + 14} ${top + 22} ${x + 32} ${top + 28} ${x + 30} ${top + 50} C${x + 30} ${top + 56} ${x + 29} ${top + 60} ${x + 27} ${top + 64} C${x + 30} ${top + 46} ${x + 26} ${top + 32} ${x + 12.5} ${top + 27} Z`}
      />
    )}
  </g>
);

const Score = () => (
  <svg width="1000" height="220" viewBox="870 860 1000 220" overflow="visible">
    <path d={lines5(1026, 1845, 900, 20)} stroke="#000" strokeWidth="2.600" />
    <path d="M1631 899 V981 M1823.500 899 V981" stroke="#000" strokeWidth="3" />
    <path d="M1840.500 899 V981" stroke="#000" strokeWidth="9" />
    <g fill="none" stroke="#000" strokeLinecap="round">
      <path
        strokeWidth="3"
        d="M1066 962 C1054 960 1050 944 1063 938 C1079 933 1091 946 1088 961 C1084 980 1058 984 1046 970 C1034 955 1037 938 1052 922 C1066 907 1077 896 1076 882 C1075 874 1073 873 1071 874 C1063 880 1061 894 1063 908 L1076 993 C1078 1008 1063 1014 1055 1008"
      />
      <path strokeWidth="7.500" d="M1040 957 C1039 940 1046 931 1055 922 C1064 913 1072 905 1074 893" />
      <path strokeWidth="7" d="M1056 955 C1055 944 1062 939 1070 940 C1078 941 1084 946 1086 956" />
      <path strokeWidth="5" d="M1063 886 C1064 880 1067 876 1071 874" />
    </g>
    <circle cx="1055" cy="1000" r="8.500" />
    <g fontFamily="Liberation Serif" fontSize="58" fontWeight="700" textAnchor="middle">
      <text transform="translate(1127 939.500) scale(1.15 1)">4</text>
      <text transform="translate(1127 980) scale(1.15 1)">4</text>
    </g>
    {notes.map((n) => (
      <Note key={n.x} {...n} />
    ))}
    <ellipse cx="1681" cy="980" rx="19" ry="11" />
    <ellipse cx="1681" cy="980" rx="7.500" ry="9.500" fill="#fff" transform="rotate(-24 1681 980)" />
    <g fontFamily="Noto Sans CJK JP">
      <text x="868" y="950" fontSize="40">Voice</text>
      {lyrics.map(([x, word]) => (
        <text key={x} x={x} y="1052" fontSize="44">{word}</text>
      ))}
    </g>
    <g fill="none" stroke="#000" strokeWidth="2.600">
      <path d="M1255 1057 Q1276 1071 1298 1057 M1475 1057 Q1497 1071 1519 1057" />
    </g>
  </svg>
);

/* ---------- editor bar pieces ---------- */

const Drop = ({ w, tight, children }) => (
  <Select w={w} tight={tight}>
    <span>{children}</span>
    <Sink by={2}><Angle size={16} weight={4} /></Sink>
  </Select>
);

const Spin = ({ w, children }) => (
  <SpinBox w={w}>
    <SpinValue>{children}</SpinValue>
    <SpinKeys>
      <SpinKey up><Angle dir="up" size={15} weight={4} /></SpinKey>
      <SpinKey><Angle size={15} weight={4} /></SpinKey>
    </SpinKeys>
  </SpinBox>
);

const LetterIcon = ({ children }) => (
  <svg
    width="34"
    height="36"
    viewBox="0 0 34 36"
    overflow="visible"
    fill={light}
    fontFamily="Noto Sans CJK JP"
    fontWeight="700"
  >
    {children}
  </svg>
);

const arrowsH = "M0 30 L7 25 V28.500 H27 V25 L34 30 L27 35 V31.500 H7 V35 Z";

const AlignIcon = ({ rows, color = light }) => (
  <svg width="26" height="28" viewBox="0 0 26 28">
    {rows.map(([a, b], n) => (
      <path key={n} d={`M${a} ${2 + n * 6} H${b}`} stroke={color} strokeWidth="3" />
    ))}
  </svg>
);

const TextEditor = () => (
  <EditorBar>
    <EditorRow h={60}>
      <GlyphSlot w={44}>
        <LetterIcon>
          <text x="3" y="28" fontSize="29">A</text>
          <path d="M26 2 H29 V35 H26 Z" />
        </LetterIcon>
      </GlyphSlot>
      <Drop w={200}>(なし)</Drop>
      <GlyphSlot w={56} shift={8}>
        <LetterIcon>
          <path d="M14 2 H28 V34 H24 V6 H21 V34 H17 V18 C10 18 6 14 6 10 C6 5 9 2 14 2 Z" />
        </LetterIcon>
      </GlyphSlot>
      <Drop w={200}>タイトル</Drop>
      <GlyphSlot w={56} shift={6}>
        <LetterIcon>
          <path d="M14 2 H33 V7 H19 V15 H31 V20 H19 V34 H14 Z M1 18 H11 V21 H4 V25 H10 V28 H4 V34 H1 Z" />
        </LetterIcon>
      </GlyphSlot>
      <Spin w={132}>20.0pt</Spin>
      <GlyphSlot w={68}>
        <LetterIcon>
          <text transform="translate(16 22) scale(1.400 1)" fontSize="29" textAnchor="middle">A</text>
          <path d={arrowsH} />
        </LetterIcon>
      </GlyphSlot>
      <Spin w={122}>100%</Spin>
      <GlyphSlot w={56} shift={6}>
        <LetterIcon>
          <text x="0" y="22" fontSize="29">A</text>
          <text x="21" y="13" fontSize="20">a</text>
          <path d="M0 25 H20 V28 H0 Z M20 15 H34 V17 H20 Z M28 20 L33 26 H29.500 V35 H26.500 V26 H23 Z" />
        </LetterIcon>
      </GlyphSlot>
      <Spin w={130}>0.00pt</Spin>
      <Gap w={16} />
      <StyleKey line="underline">u</StyleKey>
      <StyleKey line="overline">o</StyleKey>
      <StyleKey line="line-through">st</StyleKey>
      <GlyphSlot w={66} shift={6}>
        <svg width="34" height="34" viewBox="0 0 34 34">
          <path d="M2 2 H22 V24 H2 Z" fill="none" stroke={light} strokeWidth="3" />
          <path d="M12 13 H33 V33 H12 Z" fill={light} />
        </svg>
      </GlyphSlot>
      <Swatch color="#000" />
    </EditorRow>
    <EditorRow h={52} pad={4}>
      <Drop w={240} tight>Noto Sans JP</Drop>
      <Gap w={16} />
      <Drop w={240} tight>Regular</Drop>
      <GlyphSlot w={56} shift={6}>
        <LetterIcon>
          <path d="M1 1 H33 V23 H1 Z" />
          <text x="17" y="21" fontSize="22" textAnchor="middle" fill={slate}>Ab</text>
          <path d={arrowsH} />
        </LetterIcon>
      </GlyphSlot>
      <Spin w={132}>0.00pt</Spin>
      <GlyphSlot w={56} shift={4}>
        <LetterIcon>
          <text x="17" y="18" fontSize="21" textAnchor="middle" letterSpacing="-1">1o2</text>
          <path d={arrowsH} />
        </LetterIcon>
      </GlyphSlot>
      <Spin w={134}>0.00pt</Spin>
      <Gap w={16} />
      <AlignGroup>
        <AlignKey>
          <AlignIcon rows={[[0, 22], [0, 13], [0, 22], [0, 15], [0, 26]]} />
        </AlignKey>
        <AlignKey active>
          <AlignIcon color="#000" rows={[[2, 24], [7, 19], [3, 23], [6, 20], [1, 25]]} />
        </AlignKey>
        <AlignKey>
          <AlignIcon rows={[[4, 26], [12, 26], [4, 26], [11, 26], [0, 26]]} />
        </AlignKey>
        <AlignKey>
          <AlignIcon rows={[[0, 26], [0, 26], [0, 26], [0, 26], [0, 26]]} />
        </AlignKey>
      </AlignGroup>
      <Gap w={24} />
      <StyleKey>A<sup>1</sup></StyleKey>
      <StyleKey>A<sub>1</sub></StyleKey>
      <GlyphSlot w={118} shift={58}>
        <svg width="34" height="34" viewBox="0 0 34 34">
          <path d="M1 1 H23 V25 H1 Z" fill={light} />
          <path d="M14.500 15.500 H31 V32 H14.500 Z" fill={slate} stroke={light} strokeWidth="3" />
          <path d="M13 14 H23" stroke={slate} strokeWidth="1.500" />
        </svg>
      </GlyphSlot>
      <Swatch color="#fff" />
    </EditorRow>
  </EditorBar>
);

const tokenMenu = ["プロジェクト情報", "フロー情報", "現在の日付", "プロジェクトの保存日", "ページ", "音楽記号"];
const layoutMenu = ["レイアウト名", "レイアウト番号", "プレーヤー名", "プレーヤーリスト", "譜表ラベル (完全)", "譜表ラベル (省略)"];
const dateMenu = [
  "Fri Sep 27 03:31:10 2019", "2019", "19", "September", "Sep", "09", "Friday", "Fri", "27", "2019-09-27",
  "September 27, 2019", "27 September 2019", "03:31:10", "03:31", "03:31:10", "03", "03", "31", "10",
];

const SubArrow = () => (
  <svg width="16" height="18" viewBox="0 0 16 18" fill="currentColor">
    <path d="M0 0 L16 9 L0 18 Z" />
  </svg>
);

const TokenPopup = () => (
  <Popup x={1726} y={300} w={414} size={25.8}>
    {tokenMenu.map((item) => (
      <PopupItem key={item} active={item === "現在の日付"}>
        {item}
        <SubArrow />
      </PopupItem>
    ))}
    <PopupRule />
    {layoutMenu.map((item) => (
      <PopupItem key={item}>{item}</PopupItem>
    ))}
  </Popup>
);

const DatePopup = () => (
  <Popup x={2140} y={376} w={386} size={27.6}>
    {dateMenu.map((item, n) => (
      <PopupItem key={n} active={n === 9}>{item}</PopupItem>
    ))}
  </Popup>
);

/* ---------- right panel icons ---------- */

const NewPageIcon = () => (
  <svg width="30" height="26" viewBox="0 0 30 26" fill="none" stroke={light}>
    <path d="M1.500 2 H10 L15 7 V24 H1.500 Z M10 2 V8 H15" strokeWidth="2.600" />
    <path d="M18 7 H29 M23.500 2 V12" strokeWidth="2.400" />
  </svg>
);

const SpreadIcon = () => (
  <svg width="28" height="26" viewBox="0 0 28 26">
    <path d="M12 2 H1 V24 H12 M16 2 H27 V24 H16" fill="none" stroke={dim} strokeWidth="2" />
    <path d="M14 0 V26" stroke={dim} strokeWidth="1.600" strokeDasharray="3 2" />
    <g fill={dim} fontSize="11" fontFamily="Inter" fontWeight="700">
      <text x="4" y="17">L</text>
      <text x="17" y="17">R</text>
    </g>
  </svg>
);

const RowsIcon = () => (
  <svg width="22" height="24" viewBox="0 0 22 24" stroke={dim}>
    <path d="M0 2 H17 M0 17 H17 M0 22 H17" strokeWidth="2" />
    <path d="M0 9 H22" strokeWidth="6" />
  </svg>
);

const NoFrameIcon = () => (
  <svg width="28" height="26" viewBox="0 0 28 26" fill="none" stroke={dim}>
    <path d="M8 3 H20 V22 H8 Z" strokeWidth="3.500" />
    <path d="M0 24 L28 1" strokeWidth="2" />
  </svg>
);

const PencilIcon = () => (
  <svg width="24" height="28" viewBox="0 0 24 28" fill="none" stroke={dim} strokeWidth="2.200">
    <path d="M2 26 L4 19 L17 2 L22 5 L9 23 Z M2 26 L6 24" />
  </svg>
);

const RenameIcon = () => (
  <svg width="28" height="28" viewBox="0 0 28 28">
    <path d="M0 5 H17 V22 H0 Z" fill={dim} />
    <path d="M4 9 H13 M8.500 9 V19" stroke={deep} strokeWidth="2.500" />
    <path d="M15 1 C20 1 20.500 3 20.500 6 V22 C20.500 26 20 27 15 27 M26 1 C21 1 20.500 3 20.500 6 M26 27 C21 27 20.500 25 20.500 22" fill="none" stroke={dim} strokeWidth="2" />
  </svg>
);

const TrashIcon = () => (
  <svg width="22" height="28" viewBox="0 0 22 28" fill={dim}>
    <path d="M0 3 H7 V0 H15 V3 H22 V6 H0 Z M2 8 H20 L18.500 26 C18.500 27 18 28 17 28 H5 C4 28 3.500 27 3.500 26 Z" />
  </svg>
);

const MasterSpread = ({ first, top }) => (
  <Spread top={top}>
    {[false, true].map((last) => (
      <SpreadPage key={String(last)} last={last}>
        <SpreadMargin first={first}>{first && <SpreadHead />}</SpreadMargin>
      </SpreadPage>
    ))}
  </Spread>
);

/* ---------- status bar icons ---------- */

const MarqueeIcon = () => (
  <svg width="36" height="28" viewBox="0 0 36 28" fill="none" stroke="#000" strokeWidth="3">
    <path d="M1.500 7 V1.500 H8 M14 1.500 H22 M28 1.500 H34.500 V7 M34.500 11 V17 M34.500 21 V26.500 H28 M22 26.500 H14 M8 26.500 H1.500 V21 M1.500 17 V11" />
  </svg>
);

const HandIcon = () => (
  <svg width="30" height="34" viewBox="0 0 30 34">
    <path
      d="M9 20 V6 M14 18 V3 M19.500 18 V4 M25 20 V9"
      stroke={light}
      strokeWidth="4.400"
      strokeLinecap="round"
    />
    <path
      fill={light}
      d="M7 17 H27 C28 24 26 29 23 33 H11 C7 29 4 23 1 17 C0 14 4 13 5 15 L9 21 Z"
    />
  </svg>
);

const Boxes = ({ points, w, h, split, color = light, box }) => (
  <svg width={box[0]} height={box[1]} viewBox={`0 0 ${box[0]} ${box[1]}`} fill="none" stroke={color} strokeWidth="3">
    {points.map(([x, y]) => (
      <path key={x + "." + y} d={`M${x} ${y} h${w} v${h} h${-w} Z` + (split ? `M${x + w / 2} ${y} v${h}` : "")} />
    ))}
  </svg>
);

export default function App() {
  return (
    <Desktop>
      <Global />
      <MenuBar>
        <Gap w={41} />
        <MenuWord w={68}><Apple /></MenuWord>
        <MenuWord w={128} bold size={27}>Dorico</MenuWord>
        <MenuWord w={138}>ファイル</MenuWord>
        <MenuWord w={90}>編集</MenuWord>
        <MenuWord w={112}>ビュー</MenuWord>
        <MenuWord w={90}>浄書</MenuWord>
        <MenuWord w={166}>ウィンドウ</MenuWord>
        <MenuWord w={90} size={27}>Hub</MenuWord>
        <MenuWord w={113}>ヘルプ</MenuWord>
        <MenuWord w={140}>スクリプト</MenuWord>
        <StatusArea>
          <StatusSlot w={56}><Dropbox /></StatusSlot>
          <StatusSlot w={50}><Elephant /></StatusSlot>
          <StatusSlot w={60}><Chest /></StatusSlot>
          <StatusSlot w={40}><Pliers /></StatusSlot>
          <StatusSlot w={71}><Weather /></StatusSlot>
          <StatusSlot w={192} color="#111" size={28} track={-0.5}>
            <span><Low>18</Low>/<High>28</High> °C 10%</span>
          </StatusSlot>
          <StatusSlot w={57}><KeyholeIcon /></StatusSlot>
          <StatusSlot w={46} size={34}>ω</StatusSlot>
          <StatusSlot w={61}><Wings /></StatusSlot>
          <StatusSlot w={68}><Toolbox /></StatusSlot>
          <StatusSlot w={56}><RoundLetter w={27} radius="14px 4px 4px 14px">G</RoundLetter></StatusSlot>
          <StatusSlot w={58}><RoundLetter w={33} radius="4px 16px 16px 4px">D</RoundLetter></StatusSlot>
          <StatusSlot w={57}><RoundLetter>B</RoundLetter></StatusSlot>
          <StatusSlot w={51}><Calendar>27</Calendar></StatusSlot>
          <StatusSlot w={89} color="#111" size={30}>3:31</StatusSlot>
          <StatusSlot w={68}><Speaker /></StatusSlot>
          <StatusSlot w={58}><Eject /></StatusSlot>
          <StatusSlot w={41}><RoundLetter hollow w={29} radius="5px" size={22}>あ</RoundLetter></StatusSlot>
          <StatusSlot w={194} size={18} track={-2}>ひらがな (かわせみ2)</StatusSlot>
          <StatusSlot w={65}><Search /></StatusSlot>
          <StatusSlot w={76}><Siri /></StatusSlot>
        </StatusArea>
      </MenuBar>

      <TitleBar>
        <Light color="#ff5148"><LightDot /></Light>
        <Light color="#ffbd2e" />
        <Light color="#28cc41" />
        <DocTitle>
          <AppIcon />
          <span>Dorico3_Lyric の フロー 1</span>
        </DocTitle>
      </TitleBar>

      <Toolbar>
        {["設定", "記譜", "浄書", "再生", "印刷"].map((mode) => (
          <Cell key={mode} w={136} weight={500} active={mode === "浄書"}>
            <Raise>{mode}</Raise>
          </Cell>
        ))}
        <Cell w={972} dark />
        <Cell w={380} size={31} justify="space-between" pad="0 21px 0 16px">
          <Raise by={7}>フルスコア</Raise>
          <Sink by={4}><Angle size={20} /></Sink>
        </Cell>
        <Cell w={72} active><GalleyIcon /></Cell>
        <Cell w={72}><WindowIcon /></Cell>
        <Cell w={972} dark justify="flex-start" pad="0 0 0 453px">
          <CollapseKey><Angle dir="up" size={20} /></CollapseKey>
        </Cell>
        <Cell w={72}><FilmIcon /></Cell>
        <Cell w={72}><MixerIcon /></Cell>
        <Cell w={40}><PopOutIcon /></Cell>
        <Cell w={218} dark size={29} justify="flex-end" pad="0 26px 0 0">1.1.1.000</Cell>
        <Cell w={48} active><QuarterIcon /></Cell>
        <Cell w={86} dark size={28} justify="space-between" pad="0 5px 0 8px">
          <UpDownIcon />
          120
        </Cell>
        <Cell w={72}><RewindIcon /></Cell>
        <Cell w={72}><PlayIcon /></Cell>
        <Cell w={72}><RecordIcon /></Cell>
        <Cell w={72}><MetronomeIcon /></Cell>
        <Cell w={72} active><PowerIcon /></Cell>
      </Toolbar>

      <Workspace>
        <ToolColumn>
          <ToolBox>
            <Tool active><SelectTool /></Tool>
            <Tool><FrameTool /></Tool>
            <Tool><StaffSpacingTool /></Tool>
            <Tool><NoteSpacingTool /></Tool>
          </ToolBox>
          <ToolRest><Angle dir="left" weight={4} /></ToolRest>
        </ToolColumn>

        <LeftPanels>
          <Card h={320}>
            <CardHeader><Raise>楽曲フレームの形式設定</Raise></CardHeader>
            <KeyRow>
              <Key><FrameBreakIcon /></Key>
              <Key><FrameLockIcon /></Key>
            </KeyRow>
            <KeyRow single>
              <Key wide><FrameMergeIcon /></Key>
            </KeyRow>
          </Card>
          <Card h={320}>
            <CardHeader><Raise>組段の形式設定</Raise></CardHeader>
            <KeyRow>
              <Key><SystemBreakIcon /></Key>
              <Key><SystemLockIcon /></Key>
            </KeyRow>
            <KeyRow single>
              <Key wide><SystemMergeIcon /></Key>
            </KeyRow>
          </Card>
          <Card h={504}>
            <CardHeader><Raise>括弧</Raise></CardHeader>
            <BracketPalette />
          </Card>
          <Card />
        </LeftPanels>
        <Gutter />

        <Center>
          <TabStrip>
            <Tab>フルスコア</Tab>
            <TabRest />
            <AddTab><Plus size={20} weight={5} /></AddTab>
          </TabStrip>
          <Canvas>
            <Page>
              <MarginBand><MarginGuides /></MarginBand>
              <FrameStack>
                <TitleFrame>{"{@projectTitle@}"}</TitleFrame>
                <SplitFrame>
                  <SplitCell />
                  <SplitCell last />
                </SplitFrame>
                <FlowFrame>1. フロー 1</FlowFrame>
                <MusicFrame><Score /></MusicFrame>
              </FrameStack>
            </Page>
            <TextEditor />
            <TokenPopup />
            <DatePopup />
          </Canvas>
        </Center>

        <RightPanels>
          <Card h={942}>
            <CardHeader size={31.5} left={16}>
              <Raise by={7}>ページ</Raise>
              <Sink by={8}><Angle /></Sink>
            </CardHeader>
            <CardBody>
              <PageThumb>1</PageThumb>
            </CardBody>
            <CardFooter>
              <FooterSlot w={56}><NewPageIcon /></FooterSlot>
              <FooterSlot w={44}>#</FooterSlot>
              <FooterSlot w={53}><SpreadIcon /></FooterSlot>
              <FooterSlot w={55}><RowsIcon /></FooterSlot>
              <FooterSlot w={50}>
                <svg width="12" height="16" viewBox="0 0 12 16"><path d="M12 0 V16 L0 8 Z" fill={dim} /></svg>
              </FooterSlot>
              <FooterSlot w={94}>
                <svg width="12" height="16" viewBox="0 0 12 16"><path d="M0 0 V16 L12 8 Z" fill={dim} /></svg>
              </FooterSlot>
              <FooterSlot w={28}><NoFrameIcon /></FooterSlot>
            </CardFooter>
          </Card>
          <Card h={940}>
            <CardHeader size={31.5} left={16}>
              <Raise by={7}>マスターページ</Raise>
              <Sink by={8}><Angle /></Sink>
            </CardHeader>
            <CardBody>
              <SetLabel>現在のセット</SetLabel>
              <SetSelect>
                デフォルトのフルスコア
                <Sink by={7}><Angle /></Sink>
              </SetSelect>
              <MasterSpread first top={33} />
              <SpreadName>最初</SpreadName>
              <MasterSpread top={43} />
              <SpreadName>デフォルト</SpreadName>
            </CardBody>
            <CardFooter>
              <FooterSlot w={53}><Plus size={26} weight={6} /></FooterSlot>
              <FooterSlot w={48}><PencilIcon /></FooterSlot>
              <FooterSlot w={254}><RenameIcon /></FooterSlot>
              <FooterSlot w={22}><TrashIcon /></FooterSlot>
            </CardFooter>
          </Card>
          <Card h={80}>
            <CardHeader size={31.5} left={16} right={25}>
              <Raise by={7}>フロー見出し</Raise>
              <Sink><Angle dir="left" /></Sink>
            </CardHeader>
          </Card>
          <Card h={80}>
            <CardHeader size={31.5} left={16} right={25}>
              <Raise by={7}>マスターページのセット</Raise>
              <Sink><Angle dir="left" /></Sink>
            </CardHeader>
          </Card>
        </RightPanels>
        <RightGutter><Angle dir="right" /></RightGutter>
      </Workspace>

      <StatusBar>
        <Cell w={80} dark size={26}><Raise>実音</Raise></Cell>
        <Cell w={204} dark size={26} justify="flex-start" pad="0 0 0 14px"><Raise>選択なし</Raise></Cell>
        <BarFill><Angle dir="up" size={20} /></BarFill>
        <Cell w={64} active><MarqueeIcon /></Cell>
        <Cell w={64}><HandIcon /></Cell>
        <Cell w={24} dark />
        <Cell w={60} active>
          <Boxes box={[44, 16]} w={13} h={11} split color="#000" points={[[3, 2], [27, 2]]} />
        </Cell>
        <Cell w={60}>
          <Boxes box={[20, 34]} w={14} h={11} split points={[[3, 2], [3, 21]]} />
        </Cell>
        <Cell w={60}>
          <Boxes box={[36, 16]} w={6} h={11} points={[[3, 2], [15, 2], [27, 2]]} />
        </Cell>
        <Cell w={60}>
          <Boxes box={[12, 34]} w={6} h={11} points={[[3, 2], [3, 21]]} />
        </Cell>
        <Cell w={24} dark />
        <Cell w={48}><Search size={20} color={light} /></Cell>
        <Cell w={160} size={24} justify="space-between" pad="0 16px 0 15px">
          <Raise>200%</Raise>
          <Angle size={16} weight={4} />
        </Cell>
        <Cell w={48}><svg width="20" height="5" viewBox="0 0 20 5"><path d="M0 2.500 H20" stroke={light} strokeWidth="5" /></svg></Cell>
        <Cell w={48}><Plus size={20} weight={5} /></Cell>
        <Cell w={36} dark />
      </StatusBar>
    </Desktop>
  );
}
